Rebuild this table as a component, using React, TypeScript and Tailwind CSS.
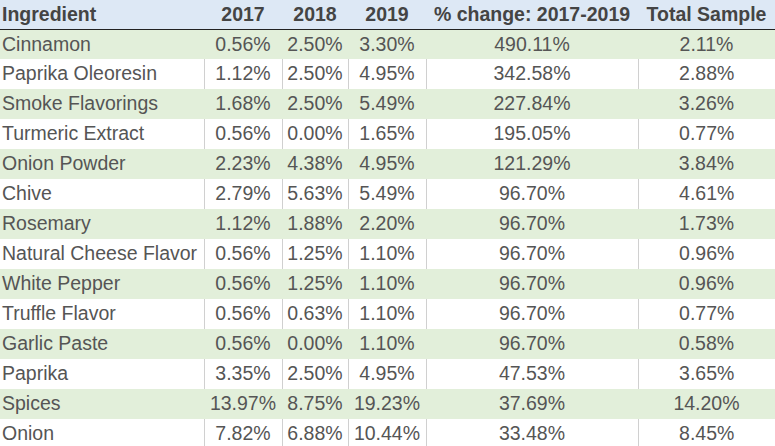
import React from 'react'

const rows = [
  ['Cinnamon', '0.56%', '2.50%', '3.30%', '490.11%', '2.11%'],
  ['Paprika Oleoresin', '1.12%', '2.50%', '4.95%', '342.58%', '2.88%'],
  ['Smoke Flavorings', '1.68%', '2.50%', '5.49%', '227.84%', '3.26%'],
  ['Turmeric Extract', '0.56%', '0.00%', '1.65%', '195.05%', '0.77%'],
  ['Onion Powder', '2.23%', '4.38%', '4.95%', '121.29%', '3.84%'],
  ['Chive', '2.79%', '5.63%', '5.49%', '96.70%', '4.61%'],
  ['Rosemary', '1.12%', '1.88%', '2.20%', '96.70%', '1.73%'],
  ['Natural Cheese Flavor', '0.56%', '1.25%', '1.10%', '96.70%', '0.96%'],
  ['White Pepper', '0.56%', '1.25%', '1.10%', '96.70%', '0.96%'],
  ['Truffle Flavor', '0.56%', '0.63%', '1.10%', '96.70%', '0.77%'],
  ['Garlic Paste', '0.56%', '0.00%', '1.10%', '96.70%', '0.58%'],
  ['Paprika', '3.35%', '2.50%', '4.95%', '47.53%', '3.65%'],
  ['Spices', '13.97%', '8.75%', '19.23%', '37.69%', '14.20%'],
  ['Onion', '7.82%', '6.88%', '10.44%', '33.48%', '8.45%'],
]

const headers = ['Ingredient', '2017', '2018', '2019', '% change: 2017-2019', 'Total Sample']

export default function App() {
  return (
    <div className="w-[775px] h-[446px] overflow-hidden bg-white font-['Liberation_Sans',Arial,sans-serif] text-[19.5px]">
      <table className="w-[775px] table-fixed border-collapse">
        <colgroup>
          <col className="w-[204px]" />
          <col className="w-[78px]" />
          <col className="w-[66px]" />
          <col className="w-[78px]" />
          <col className="w-[212px]" />
          <col className="w-[137px]" />
        </colgroup>
        <thead>
          <tr className="h-[29px] bg-[#dde8f5] border-b border-[#222]">
            {headers.map((h, i) => (
              <th
                key={h}
                className={`p-0 font-bold text-[#444] leading-none whitespace-nowrap ${i === 0 ? 'text-left pl-[2px]' : 'text-center'}`}
              >
                {h}
              </th>
            ))}
          </tr>
        </thead>
        <tbody>
          {rows.map((r, ri) => {
            const green = ri % 2 === 0
            return (
              <tr key={r[0]} className={`h-[30px] ${green ? 'bg-[#e2efda]' : 'bg-white'}`}>
                {r.map((c, ci) => (
                  <td
                    key={ci}
                    className={`p-0 text-[#555] leading-none whitespace-nowrap ${ci === 0 ? 'text-left pl-[2px]' : 'text-center'} ${!green && ci > 0 ? 'border-l border-[#d0d0d0]' : ''}`}
                  >
                    {c}
                  </td>
                ))}
              </tr>
            )
          })}
        </tbody>
      </table>
    </div>
  )
}
